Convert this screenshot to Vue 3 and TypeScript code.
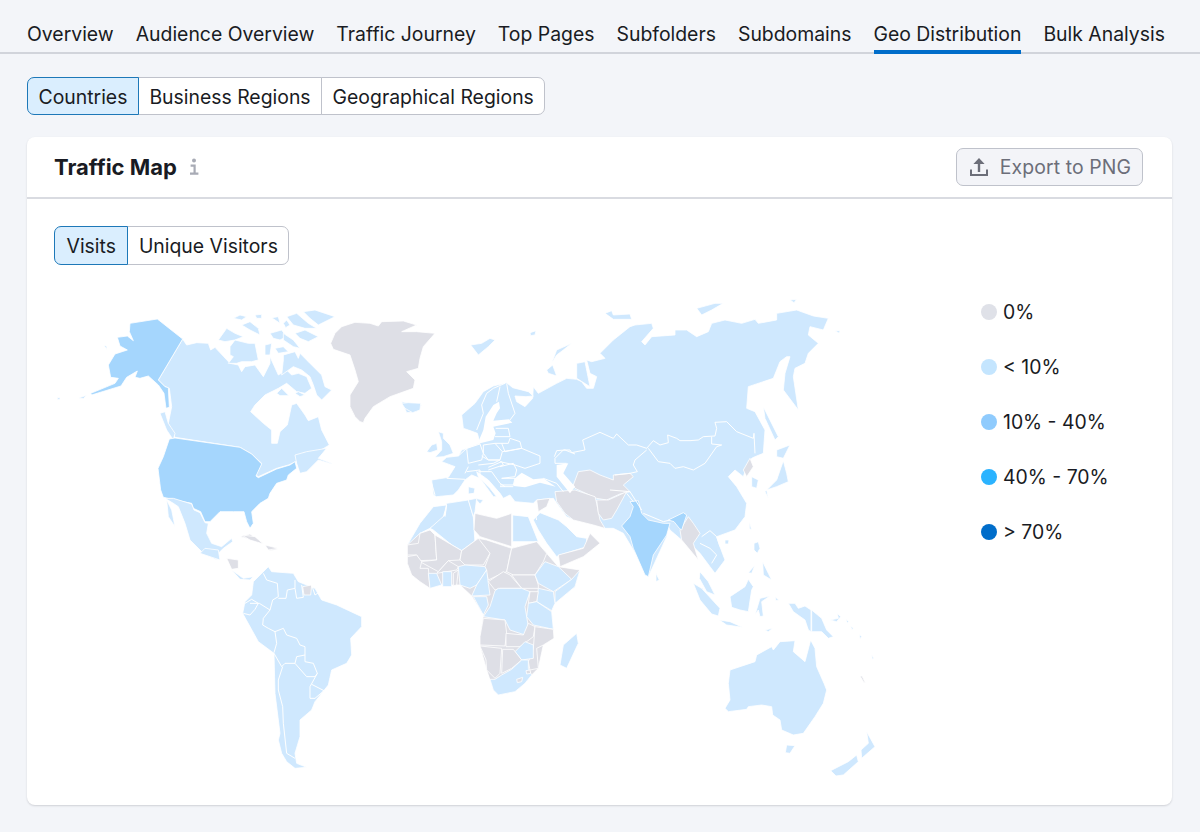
<script setup lang="ts">
type Shape = { k: 'l' | 'm' | 'g'; p: string }

const tabs: { label: string; active?: boolean }[] = [
  { label: 'Overview' },
  { label: 'Audience Overview' },
  { label: 'Traffic Journey' },
  { label: 'Top Pages' },
  { label: 'Subfolders' },
  { label: 'Subdomains' },
  { label: 'Geo Distribution', active: true },
  { label: 'Bulk Analysis' },
]
const legend = [
  { label: '0%', color: '#dfe1e8' },
  { label: '< 10%', color: '#c4e5fe' },
  { label: '10% - 40%', color: '#8fcbfd' },
  { label: '40% - 70%', color: '#2bb3ff' },
  { label: '> 70%', color: '#006dca' },
]

const northAmerica: Shape[] = [
  { k: 'l', p: '428,147 440,165 470,158 505,160 512,180 525,172 570,220 595,225 605,245 615,230 645,225 670,260 690,220 690,200 715,255 740,240 755,255 775,250 800,260 815,295 795,310 770,305 740,280 715,295 675,315 645,345 632,365 670,400 695,420 695,460 712,460 720,425 742,405 755,345 770,340 795,375 805,392 835,380 845,420 868,465 835,485 790,490 768,515 745,525 710,535 655,560 648,555 665,520 635,492 600,472 405,442 385,400 395,350 388,295 375,290 355,270' },
  { k: 'l', p: '765,495 800,485 860,475 835,505 875,520 875,522 835,510 800,545 780,550 770,520' },
  { k: 'l', p: '360,370 375,365 385,400 405,430 400,450 380,420' },
  { k: 'l', p: '1085,335 1115,340 1145,345 1130,365 1100,368' },
  { k: 'l', p: '52,323 60,323 60,329 52,329' },
  { k: 'l', p: '115,324 140,316 130,326' },
  { k: 'g', p: '905,110 945,97 990,100 1015,108 1025,95 1090,93 1130,105 1085,125 1130,125 1185,130 1150,170 1140,205 1135,235 1100,245 1125,270 1120,295 1050,320 1000,350 975,385 970,398 960,395 945,380 930,350 930,315 955,275 945,240 930,195 880,178 872,160 885,130' },
  { k: 'm', p: '270,100 352,87 428,147 355,270 375,290 385,293 388,352 378,355 372,310 355,285 325,258 300,265 285,262 292,243 260,262 243,288 155,315 152,310 225,280 235,265 212,262 205,225 225,192 262,180 240,168 232,142 262,138 280,152 268,125' },
  { k: 'm', p: '192,165 200,170 200,178' },
  { k: 'm', p: '388,447 405,444 600,472 635,492 665,522 648,558 655,563 710,537 750,525 765,515 770,535 745,555 740,570 710,580 690,610 685,625 660,640 635,665 640,700 630,715 620,695 612,665 580,665 540,665 510,695 495,695 482,665 460,655 455,640 405,630 370,622 362,600 354,535 370,500' },
  { k: 'l', p: '375,625 400,625 455,642 462,660 480,668 495,698 505,700 500,730 515,760 545,770 575,745 578,755 550,775 535,790 530,810 490,790 450,750 435,700 415,650 400,640' },
  { k: 'l', p: '380,630 395,660 405,710 385,680' },
  { k: 'g', p: '600,740 630,732 670,760 640,750' },
  { k: 'g', p: '680,768 715,778 690,782' },
]

const arctic: Shape[] = [
  { k: 'l', p: '10,105 35,70 60,85 85,95 60,105 30,110' },
  { k: 'l', p: '45,125 60,105 100,115 120,115 130,165 110,170 80,170 65,175 40,175 55,155 45,150' },
  { k: 'l', p: '55,40 75,30 95,35 80,45' },
  { k: 'l', p: '80,60 105,50 130,70 135,90 105,75' },
  { k: 'l', p: '120,30 140,28 140,40 125,40' },
  { k: 'l', p: '170,38 190,35 195,55' },
  { k: 'l', p: '165,85 200,75 215,95 195,105 175,100' },
  { k: 'l', p: '205,55 215,45 225,60 212,68' },
  { k: 'l', p: '265,20 300,15 360,35 310,60 285,40' },
  { k: 'l', p: '215,35 245,25 280,55 305,70 270,70 235,60' },
  { k: 'l', p: '240,85 270,75 310,95 280,110 255,100' },
  { k: 'l', p: '150,120 170,115 165,150 150,150' },
  { k: 'l', p: '180,130 205,125 220,140 190,145' },
  { k: 'l', p: '205,85 235,105 255,130 235,125 205,105' },
  { k: 'l', p: '205,150 240,140 250,160 255,145 280,170 320,210 330,245 350,255 320,285 305,270 295,240 285,215 260,195 235,185 200,210 205,165' },
  { k: 'l', p: '185,265 200,250 222,272 195,272' },
  { k: 'l', p: '240,265 250,260 270,270 255,275' },
]

const eurasia: Shape[] = [
  { k: 'l', p: '185,375 225,340 250,305 280,288 320,278 338,293 385,305 400,318 378,320 345,318 350,335 375,350 398,325 400,290 415,310 470,280 500,265 530,268 545,275 560,295 580,295 590,260 570,250 560,210 575,215 615,205 600,190 640,150 690,110 705,105 755,100 760,115 725,155 735,165 755,140 825,135 825,120 860,120 890,140 925,125 935,100 975,90 1025,100 1065,88 1075,100 1130,90 1130,70 1190,60 1240,78 1285,85 1270,120 1230,110 1225,135 1255,160 1225,190 1215,220 1185,235 1180,260 1195,360 1150,300 1155,250 1170,200 1160,200 1140,215 1120,265 1045,290 1040,355 1065,365 1095,420 1090,490 1065,500 1055,505 1040,530 1030,560 1005,540 985,560 1010,590 1040,640 1035,680 1005,720 950,740 960,770 975,810 945,850 930,830 900,790 880,770 845,750 810,720 800,700 800,740 745,860 700,780 670,730 640,715 610,715 590,700 520,690 500,680 470,640 460,625 410,630 400,640 345,635 330,615 310,625 300,610 265,570 230,545 235,560 270,595 290,620 280,620 240,565 215,555 195,570 175,600 160,615 110,620 100,615 95,570 145,562 165,530 125,515 140,502 175,498 185,480 200,475 240,460 232,430 205,420 190,415' },
  { k: 'l', p: '115,425 130,430 130,445 150,465 160,490 130,500 105,502 125,480 125,455' },
  { k: 'l', p: '80,485 95,465 110,460 113,480 90,488' },
  { k: 'l', p: '5,340 25,338 62,340 60,360 38,368 15,355' },
  { k: 'l', p: '212,165 245,160 270,145 285,150 265,170 235,195' },
  { k: 'l', p: '455,220 470,180 515,160 490,180 470,195' },
  { k: 'l', p: '440,240 458,225 470,258 445,250' },
  { k: 'l', p: '530,220 555,215 570,290 530,265' },
  { k: 'l', p: '615,70 635,62 640,75 690,72 695,88 640,88' },
  { k: 'l', p: '890,55 945,40 970,40 935,60 905,75' },
  { k: 'l', p: '1170,30 1190,28 1182,38' },
  { k: 'l', p: '1305,122 1320,122 1318,130' },
  { k: 'l', p: '390,128 408,122 405,135 392,137' },
  { k: 'l', p: '1090,350 1135,440 1125,450 1095,385' },
  { k: 'l', p: '1130,480 1170,465 1150,505 1130,500' },
  { k: 'l', p: '1150,512 1160,550 1165,575 1130,590 1100,600 1105,625 1095,605 1130,570' },
  { k: 'l', p: '1055,560 1075,570 1070,595 1055,590' },
  { k: 'l', p: '1048,695 1055,720 1048,715' },
  { k: 'l', p: '975,750 987,750 985,762 975,762' },
  { k: 'l', p: '768,850 778,870 768,875' },
  { k: 'l', p: '205,590 225,595 222,610 205,612' },
  { k: 'l', p: '225,625 250,630 240,642' },
  { k: 'g', p: '1030,540 1050,505 1060,530 1040,560' },
  { k: 'g', p: '535,545 570,540 600,555 640,570 640,555 690,550 700,560 670,585 690,605 660,612 620,630 590,625 525,595 520,585' },
  { k: 'g', p: '465,605 525,600 585,620 590,640 600,690 615,715 580,705 520,690 495,670 470,635' },
  { k: 'g', p: '590,630 625,630 665,612 680,605 650,660 635,685 610,690 595,670' },
  { k: 'g', p: '410,630 450,625 440,650 415,665' },
  { k: 'g', p: '865,680 880,700 900,730 880,760 895,810 870,780 845,750 840,720' },
  { k: 'm', p: '690,635 715,632 725,670 745,690 790,700 810,700 800,735 760,795 745,860 735,855 700,775 690,740 665,708 690,680 700,650' },
  { k: 'm', p: '805,690 850,668 860,675 845,720 838,715 822,695' },
  { k: 'l', p: '400,690 420,668 475,690 500,710 530,740 560,745 560,770 480,795 470,800 440,760 415,720' },
  { k: 'g', p: '475,795 550,775 570,730 600,760 550,800 480,830' },
  { k: 'l', p: '25,760 60,700 100,650 140,645 130,680 110,700 90,715 60,730 55,760 22,765' },
  { k: 'l', p: '90,715 135,675 140,640 205,630 220,680 225,760 180,785 100,720' },
  { k: 'l', p: '205,630 230,625 225,665 220,680' },
  { k: 'g', p: '225,670 290,685 335,670 335,770 240,740 222,720' },
  { k: 'l', p: '338,675 385,680 415,755 338,755' },
]

const seas: string[] = [
  '297,335 280,345 257,380 250,420 235,455 240,460 280,450 287,430 280,410 337,398 327,388 280,392 290,370 300,355',
  '340,588 345,565 365,548 400,568 430,565 467,590 420,578 375,592',
  '470,525 505,520 490,550 525,590 510,610 470,560',
]

const borders4: string[] = [
  '465,505 490,480 510,480 515,488 555,480 548,450 600,427 640,445 650,432 685,465 710,465 740,475',
  '740,475 760,452 780,465 805,458 803,435 830,445 840,452 870,452 895,450 910,440 945,438 950,415 945,397 980,395 1010,425 1060,445 1062,430 1065,490',
  '745,475 775,515 810,520 825,535 850,530 880,540 915,520 950,470 965,465 935,462 935,440',
  '740,480 705,510 700,525 712,545 690,550 645,555',
  '465,505 465,520 500,520',
  '690,605 725,660',
  '730,670 790,695 810,690',
  '700,635 680,610',
  '905,740 930,722 950,740 960,770',
  '900,760 930,775 950,795 935,820',
  '400,645 410,690',
  '450,665 495,690',
  '140,645 135,680',
  '630,600 690,605',
]

const bordersEurope: string[] = [
  '155,150 175,100 170,75 185,40 205,25 240,10',
  '225,20 215,65',
  '245,10 250,40 270,100 255,120',
  '212,145 250,145 255,170',
  '210,170 255,170',
  '210,190 250,190',
  '250,190 255,175 285,185 290,205 240,215 230,190',
  '175,195 210,190 232,215 225,240 190,240 175,220 175,195',
  '125,205 165,192 175,220 170,240 130,250 125,205',
  '100,228 125,205',
  '130,260 120,280',
  '232,215 290,205 345,228 345,250 300,265 270,255 225,245',
  '170,228 190,240 225,240 205,250 160,255',
  '190,262 230,245 235,255 190,270',
  '225,260 265,250 275,270 270,290 230,295',
  '160,275 200,275 225,310 240,320',
  '230,295 270,295 265,315 225,315',
  '225,320 265,320',
  '20,310 30,345',
  '65,295 120,298',
  '125,275 165,270 165,295',
  '355,295 395,310 415,335',
  '388,230 395,212 420,210 450,222',
]

const africa: Shape[] = [
  { k: 'g', p: '622,75 660,40 705,45 785,92 835,55 935,85 1010,65 1040,100 1075,140 1140,150 1125,200 1065,250 1055,272 1060,328 1062,355 1030,375 1015,445 995,465 975,490 945,515 895,525 880,510 860,450 840,378 840,350 850,285 815,228 780,195 725,195 690,205 635,165 622,130' },
  { k: 'g', p: '622,75 655,70 660,40 690,30 705,45 710,120 660,122 650,105 622,105' },
  { k: 'g', p: '705,45 785,92 780,120 745,122 715,155 660,125 710,120' },
  { k: 'g', p: '785,92 835,55 870,65 870,100 850,135 795,135 780,120' },
  { k: 'g', p: '835,55 860,60 935,85 930,105 920,155 885,170 865,180 855,140 870,100' },
  { k: 'g', p: '935,85 1010,65 1040,100 1030,125 1005,165 940,165 920,155' },
  { k: 'g', p: '935,165 1005,165 1015,195 1015,205 965,205' },
  { k: 'g', p: '865,185 910,155 930,165 965,205 900,205 885,210' },
  { k: 'l', p: '1035,125 1075,140 1115,178 1060,215 1015,190 1005,165' },
  { k: 'l', p: '1140,150 1125,200 1065,250 1065,215 1115,178' },
  { k: 'l', p: '1015,205 1060,215 1065,250 1055,272 1010,245' },
  { k: 'g', p: '622,110 650,105 665,125 660,145 685,145 690,205 660,185 635,165 622,130' },
  { k: 'g', p: '715,155 745,122 775,140 770,150 710,160' },
  { k: 'l', p: '685,160 710,160 725,195 690,205' },
  { k: 'l', p: '728,155 755,155 755,200 728,200' },
  { k: 'g', p: '760,160 775,150 770,195 760,197' },
  { k: 'l', p: '775,140 795,135 855,140 860,150 830,195 810,205 780,195' },
  { k: 'l', p: '860,150 865,190 870,225 815,228 830,195' },
  { k: 'l', p: '820,230 860,230 865,255 850,285' },
  { k: 'l', p: '895,205 965,205 990,215 975,260 985,320 975,345 930,330 915,300 850,290 870,260 885,212' },
  { k: 'g', p: '990,215 1015,215 1010,245 985,250' },
  { k: 'l', p: '985,250 1010,245 1055,275 1060,328 1000,315 980,290' },
  { k: 'g', p: '850,295 915,300 920,340 915,378 840,375 840,350' },
  { k: 'g', p: '918,340 970,345 985,310 1005,320 1000,350 960,380 918,380' },
  { k: 'g', p: '1005,320 1060,328 1062,355 1030,375 1010,385 1015,445 990,450 985,425 1000,385' },
  { k: 'l', p: '945,395 975,365 1000,375 1000,415 965,420' },
  { k: 'g', p: '840,378 905,385 900,460 885,475 860,450 858,420' },
  { k: 'g', p: '908,388 940,388 965,420 935,445 905,460' },
  { k: 'l', p: '870,478 885,478 905,465 935,448 965,420 985,420 985,445 995,465 975,490 945,515 895,525 880,510' },
  { k: 'g', p: '950,478 968,472 965,485 952,488' },
  { k: 'g', p: '978,452 990,450 992,460 980,462' },
  { k: 'l', p: '1130,340 1135,370 1100,445 1080,435 1090,375' },
  { k: 'l', p: '205,140 215,155 280,160 295,185 345,205 365,240 410,255 485,290 485,320 452,355 455,405 440,430 395,450 385,495 345,545 335,570 300,600 300,650 285,700 290,730 320,742 285,745 260,725 245,700 235,660 240,640 225,520 222,400 175,365 128,280 135,245 155,225 160,185' },
  { k: 'l', p: '0,100 15,85 55,90 60,120 30,110' },
  { k: 'g', p: '80,115 115,120 115,145 95,148' },
  { k: 'l', p: '95,150 130,175 160,170 150,180 120,178' },
  { k: 'g', p: '308,200 335,195 332,225 312,225' },
  { k: 'g', p: '125,45 165,50 190,72 150,60' },
  { k: 'g', p: '195,75 235,85 205,90' },
]

const borders5: string[] = [
  '190,160 200,180 232,190 235,230 218,240 210,270 178,250 150,250',
  '235,235 258,235 262,210 285,205 285,180',
  '285,205 290,235 310,232 305,195',
  '335,195 345,225 360,215',
  '135,250 155,238 175,250 165,268 150,285 130,280',
  '210,270 190,295 188,315 205,325 225,335 230,370 222,398',
  '225,335 250,325 260,345 290,355 300,375 315,380 315,405 290,410 285,430 255,430 245,440 222,400',
  '285,430 320,470 345,470 352,460 340,430 315,425 315,405',
  '248,440 235,480 235,510 248,560 250,610 260,700 285,715',
  '352,460 330,500 330,535 345,535 372,512 335,493',
]

const oceania: Shape[] = [
  { k: 'l', p: '150,450 225,425 230,405 275,380 280,390 300,365 345,362 340,395 375,425 392,360 405,385 410,440 432,490 440,510 430,550 405,590 370,640 340,645 305,630 300,600 278,585 275,560 245,555 205,560 200,568 145,575 135,565 150,540 145,490' },
  { k: 'l', p: '320,675 345,677 330,700 316,698' },
  { k: 'l', p: '560,635 585,680 545,715 543,690 565,670' },
  { k: 'l', p: '530,705 535,725 490,765 468,768 452,752 505,725' },
  { k: 'l', p: '325,250 345,250 355,265 375,258 393,270 393,335 385,330 375,300 340,275' },
  { k: 'l', p: '395,270 425,295 440,330 460,350 445,355 425,335 395,335' },
  { k: 'l', p: '450,300 475,295 472,280 482,290 470,305' },
  { k: 'l', p: '40,190 65,205 120,265 115,288 95,282 60,240' },
  { k: 'l', p: '118,300 150,305 188,322 140,315' },
  { k: 'l', p: '150,230 195,200 205,178 220,200 215,210 205,275 180,270 155,262' },
  { k: 'l', p: '225,285 240,235 270,228 245,245 250,288 240,290 235,270' },
  { k: 'l', p: '60,155 85,185 105,225 80,215 58,175' },
  { k: 'l', p: '222,70 235,65 240,85 232,100 222,90' },
  { k: 'l', p: '248,125 265,160 275,180 250,165' },
  { k: 'l', p: '205,158 225,135 215,160' },
  { k: 'l', p: '255,330 278,325 265,335' },
  { k: 'l', p: '285,230 296,240 288,242' },
  { k: 'l', p: '498,298 506,304 502,310' },
  { k: 'l', p: '512,318 520,324 516,330' },
  { k: 'l', p: '538,342 545,350 540,356' },
  { k: 'l', p: '575,405 582,415 577,418' },
  { k: 'g', p: '540,468 546,468 556,488 552,488' },
]
</script>

<template>
  <div class="page">
    <nav class="tabs">
      <a v-for="t in tabs" :key="t.label" class="tab" :class="{ active: t.active }">{{ t.label }}</a>
    </nav>

    <div class="seg seg-top">
      <button class="seg-btn on">Countries</button>
      <button class="seg-btn">Business Regions</button>
      <button class="seg-btn">Geographical Regions</button>
    </div>

    <section class="card">
      <header class="card-head">
        <h2 class="title">Traffic Map</h2>
        <svg class="info" viewBox="0 0 10 18" width="10" height="18" aria-hidden="true">
          <circle cx="5" cy="2.4" r="2" fill="#a8abb5" />
          <path d="M1.6 7.6H5.6V15.6M1 15.6H9.4" fill="none" stroke="#a8abb5" stroke-width="2.2" />
        </svg>
        <button class="export">
          <svg viewBox="0 0 20 20" width="20" height="20" aria-hidden="true">
            <path d="M10 1 15.6 6.9H11.2V15H8.8V6.9H4.4Z" fill="#6c6e79" />
            <path d="M1 12.5V19H19V12.5H17V17H3V12.5Z" fill="#6c6e79" />
          </svg>
          <span>Export to PNG</span>
        </button>
      </header>

      <div class="card-body">
        <div class="seg seg-inner">
          <button class="seg-btn on">Visits</button>
          <button class="seg-btn">Unique Visitors</button>
        </div>

        <div class="map-row">
          <svg class="map" viewBox="54 290 880 490" width="880" height="490" role="img" aria-label="World traffic map">
            <g class="land" transform="translate(40 290) scale(.33333)">
              <polygon v-for="(s, i) in northAmerica" :key="i" :class="s.k" :points="s.p" />
            </g>
            <g class="land" transform="translate(215 305) scale(.33333)">
              <polygon v-for="(s, i) in arctic" :key="i" :class="s.k" :points="s.p" />
            </g>
            <g class="land" transform="translate(400 290) scale(.33333)">
              <polygon v-for="(s, i) in eurasia" :key="i" :class="s.k" :points="s.p" />
              <polygon v-for="(p, i) in seas" :key="i" class="sea" :points="p" />
              <polyline v-for="(p, i) in borders4" :key="i" class="border" :points="p" />
            </g>
            <g class="land" transform="translate(425 380) scale(.33333)">
              <polyline v-for="(p, i) in bordersEurope" :key="i" class="border" :points="p" />
            </g>
            <g class="land" transform="translate(200 520) scale(.33333)">
              <polygon v-for="(s, i) in africa" :key="i" :class="s.k" :points="s.p" />
              <polyline v-for="(p, i) in borders5" :key="i" class="border" :points="p" />
            </g>
            <g class="land" transform="translate(680 520) scale(.33333)">
              <polygon v-for="(s, i) in oceania" :key="i" :class="s.k" :points="s.p" />
            </g>
          </svg>

          <ul class="legend">
            <li v-for="l in legend" :key="l.label" class="legend-row">
              <i class="dot" :style="{ background: l.color }"></i>
              <span>{{ l.label }}</span>
            </li>
          </ul>
        </div>
      </div>
    </section>
  </div>
</template>

<style>
html, body { margin: 0; background: #f3f5f9; }
</style>

<style scoped>
.page {
  height: 832px;
  box-sizing: border-box;
  overflow: hidden;
  background: #f3f5f9;
  color: #191b23;
  font-family: Inter, "Liberation Sans", sans-serif;
  font-size: 19.4px;
}
.tabs {
  display: flex;
  gap: 22px;
  height: 54px;
  box-sizing: border-box;
  padding: 0 27px;
  border-bottom: 2px solid #d1d4db;
}
.tab {
  height: 54px;
  box-sizing: border-box;
  padding-top: 20px;
  line-height: 28px;
  white-space: nowrap;
}
.tab.active { border-bottom: 4px solid #006dca; }

.seg { display: inline-flex; vertical-align: top; }
.seg-top { display: flex; width: max-content; margin: 23px 0 0 27px; }
.seg-btn {
  height: 38px;
  margin: 0 0 0 -1px;
  padding: 1px 10.5px 0;
  font: inherit;
  color: inherit;
  background: #fff;
  border: 1px solid #bfc2cb;
  white-space: nowrap;
}
.seg-btn:first-child { margin-left: 0; border-radius: 7px 0 0 7px; }
.seg-btn:last-child { border-radius: 0 7px 7px 0; }
.seg-btn.on {
  position: relative;
  z-index: 1;
  background: #daeefe;
  border-color: #1d78b8;
}

.card {
  margin: 22px 28px 0 27px;
  background: #fff;
  border-radius: 8px;
  box-shadow: 0 1px 2px rgba(25, 27, 35, .16);
}
.card-head {
  display: flex;
  align-items: center;
  height: 62px;
  box-sizing: border-box;
  padding: 0 29px 0 27px;
  border-bottom: 2px solid #d9dbe1;
}
.title { margin: 0; font-size: 22px; font-weight: 700; line-height: 30px; }
.info { margin-left: 12px; }
.export {
  display: flex;
  align-items: center;
  gap: 11px;
  height: 38px;
  margin-left: auto;
  padding: 0 11px 0 12px;
  font: inherit;
  letter-spacing: .1px;
  color: #6c6e79;
  background: #f3f4f8;
  border: 1px solid #bfc2cb;
  border-radius: 7px;
}
.card-body { padding: 27px 0 25px 27px; }
.seg-inner { display: flex; width: max-content; }
.seg-inner .seg-btn { height: 39px; }
.seg-inner .seg-btn.on { padding: 1px 11.5px 0; }
.map-row { display: flex; align-items: flex-start; margin-top: 25px; }
.map { display: block; flex: none; }

.land polygon { stroke: #fff; stroke-width: 2.4; stroke-linejoin: round; }
.land .l { fill: #cfe8fe; }
.land .m { fill: #a5d6fd; }
.land .g { fill: #dedfe6; }
.land polygon.sea { fill: #fff; stroke: none; }
.land .border { fill: none; stroke: #fff; stroke-width: 3; stroke-linejoin: round; }

.legend {
  display: flex;
  flex-direction: column;
  gap: 31px;
  margin: 10px 0 0 47px;
  padding: 0;
  list-style: none;
}
.legend-row { display: flex; align-items: center; gap: 6px; height: 24px; white-space: nowrap; }
.dot { flex: none; width: 16px; height: 16px; border-radius: 50%; }
</style>
